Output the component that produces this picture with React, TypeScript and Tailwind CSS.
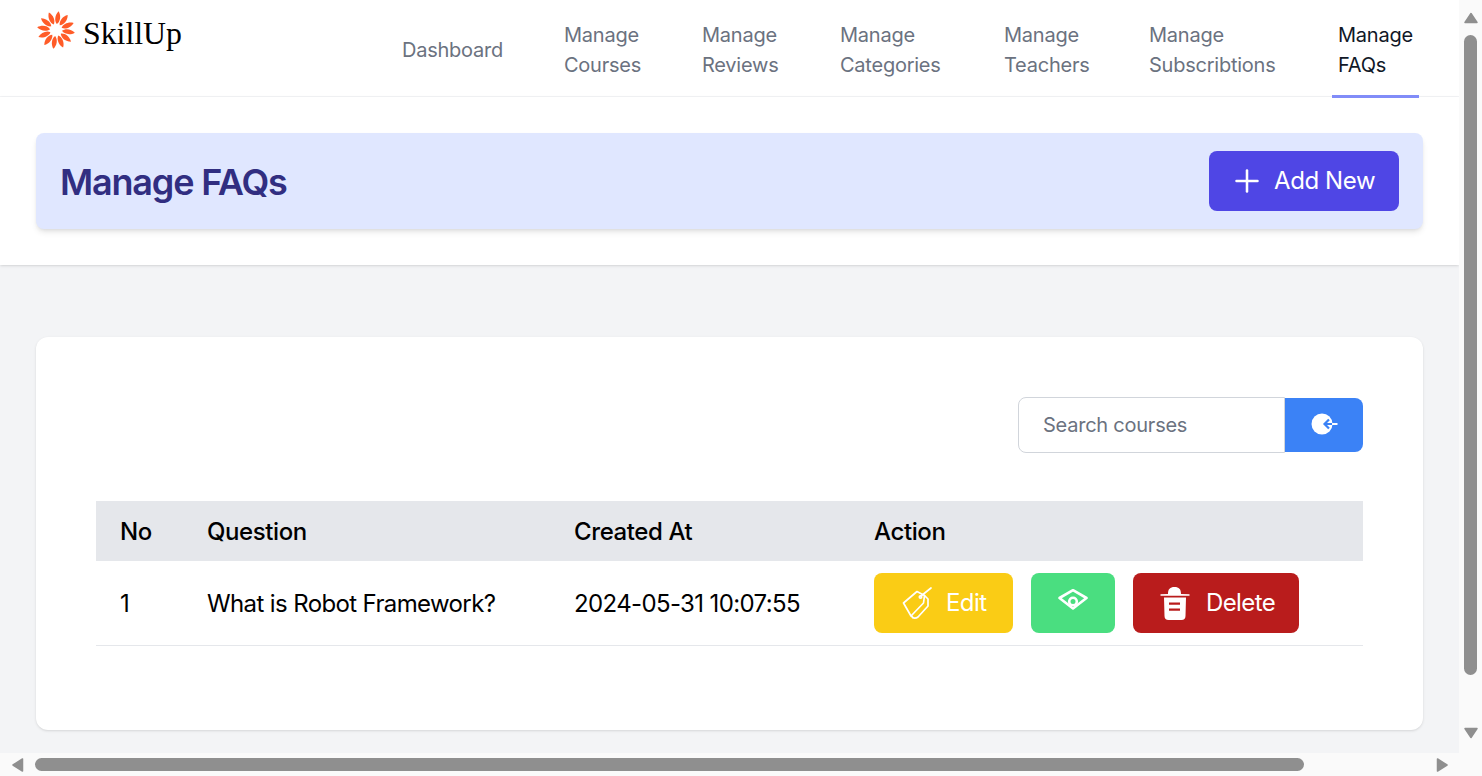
import { Plus } from "lucide-react"

const navItems = [
  { lines: ["Dashboard"], width: "w-[114px]" },
  { lines: ["Manage", "Courses"], width: "w-[90px]" },
  { lines: ["Manage", "Reviews"], width: "w-[90px]" },
  { lines: ["Manage", "Categories"], width: "w-[116px]" },
  { lines: ["Manage", "Teachers"], width: "w-[97px]" },
  { lines: ["Manage", "Subscribtions"], width: "w-[141px]" },
]

function Logo() {
  const petals = Array.from({ length: 12 }, (_, i) => i * 30 + 8)
  return (
    <svg width="38" height="38" viewBox="0 0 38 38" className="shrink-0">
      {petals.map((deg) => (
        <path
          key={deg}
          d="M19 13 C15.8 10 15.8 4 19 0 C22.2 4 22.2 10 19 13 Z"
          fill="#ff5c28"
          transform={`rotate(${deg} 19 19)`}
        />
      ))}
    </svg>
  )
}

function TagIcon() {
  return (
    <svg width="30" height="34" viewBox="6 3 30 34" fill="none" stroke="#fff" strokeWidth="1.7" strokeLinejoin="round" strokeLinecap="round" className="shrink-0">
      <path d="M7.5 20 L21 8.5 L28.5 12.5 L27.5 20 L15 33 Z" />
      <path d="M15.5 33 C17 36 20 35.5 22 34 L32 23 L32 16 L28.5 12.5" />
      <circle cx="24.5" cy="14" r="1.2" />
      <path d="M25 13 L35 5" />
    </svg>
  )
}

function EyeIcon() {
  return (
    <svg width="30" height="22" viewBox="0 0 30 22" fill="none" stroke="#fff" className="shrink-0">
      <path d="M1.5 9 L15 1.2 L28.5 9 L15 19.5 Z" strokeWidth="2.6" strokeLinejoin="round" />
      <circle cx="15" cy="12.5" r="3.8" strokeWidth="2.6" />
    </svg>
  )
}

function TrashIcon() {
  return (
    <svg width="30" height="35" viewBox="6 4 30 35" fill="#fff" className="shrink-0">
      <path d="M14 12 C14 7 16 5 20.5 5 C25 5 27 7 27 12 L35.5 12.2 L35.5 13.8 L6.5 13.8 L6.5 12.2 Z" />
      <path
        fillRule="evenodd"
        d="M10 15.5 L32 15.5 L31.5 34 C31.5 36.5 30 38 27.5 38 L14.5 38 C12 38 10.5 36.5 10.5 34 Z M15 20.5 L15 22.8 L26 22.8 L26 20.5 Z M15 26.5 L15 28.8 L26 28.8 L26 26.5 Z"
      />
    </svg>
  )
}

function SearchIcon() {
  return (
    <svg width="28" height="28" viewBox="0 0 28 28">
      <circle cx="12" cy="13" r="10.5" fill="#fff" />
      <path d="M22 13 L15 13 M19 8.5 L14.5 13 L19 17.5" fill="none" stroke="#3b82f6" strokeWidth="2.2" />
      <path d="M22 13 L27.5 13" fill="none" stroke="#fff" strokeWidth="2" />
    </svg>
  )
}

function ScrollArrow({ points }: { points: string }) {
  return (
    <svg width="16" height="16" viewBox="0 0 16 16" className="shrink-0">
      <polygon points={points} fill="#8f8f8f" stroke="#8f8f8f" strokeWidth="1.5" strokeLinejoin="round" />
    </svg>
  )
}

export default function App() {
  return (
    <div className="flex h-screen flex-col overflow-hidden bg-[#fafafa] font-['Inter',sans-serif] tracking-[-0.025em]">
      <div className="flex min-h-0 flex-1">
        <div className="min-w-0 flex-1 bg-[#f3f4f6]">
          <header className="flex h-[97px] justify-between border-b border-[#f3f4f6] bg-white pl-[37px] pr-[40px]">
            <div className="flex items-start gap-[8px] pt-[11px]">
              <Logo />
              <span className="pt-[3px] font-['Liberation_Serif',serif] text-[31.8px] leading-[40px] tracking-normal text-black">SkillUp</span>
            </div>
            <nav className="flex gap-[48px]">
              {navItems.map((item) => (
                <a key={item.lines.join(" ")} className={`${item.width} flex h-[96px] flex-col justify-center px-[6px] pt-[4px] text-[20px] leading-[30px] tracking-[-0.012em] text-[#6b7280]`}>
                  {item.lines.map((line) => (
                    <span key={line} className="whitespace-nowrap">{line}</span>
                  ))}
                </a>
              ))}
              <a className="flex h-[98px] w-[87px] flex-col justify-center border-b-[3px] border-[#818cf8] px-[6px] pt-[5px] text-[20px] leading-[30px] tracking-[-0.012em] text-[#111827]">
                <span>Manage</span>
                <span>FAQs</span>
              </a>
            </nav>
          </header>

          <div className="h-[168px] bg-white px-[36px] pt-[36px] shadow">
            <div className="flex h-[96px] items-center justify-between rounded-lg bg-[#e0e7ff] px-[24px] shadow-md">
              <h1 className="pt-[1px] text-[36px] font-semibold leading-[40px] tracking-[-0.033em] text-[#312e81]">Manage FAQs</h1>
              <button className="flex h-[60px] w-[190px] items-center gap-[9px] rounded-lg bg-[#4f46e5] pl-[20px] text-[24px] font-normal text-white">
                <Plus size={36} strokeWidth={1.7} />
                Add New
              </button>
            </div>
          </div>

          <div className="px-[36px] pt-[72px]">
            <div className="h-[393px] rounded-xl bg-white px-[60px] pt-[60px] shadow-sm">
              <div className="flex justify-end">
                <div className="flex h-[56px] w-[267px] items-center rounded-l-lg border border-[#d1d5db] bg-white pl-[24px] text-[20px] tracking-[-0.012em] text-[#6b7280]">
                  Search courses
                </div>
                <button className="mt-[1px] flex h-[54px] w-[78px] items-center justify-center rounded-r-lg bg-[#3b82f6]">
                  <SearchIcon />
                </button>
              </div>

              <table className="mt-[48px] w-full table-fixed text-left text-[24px] text-black">
                <thead>
                  <tr className="h-[60px] bg-[#e5e7eb]">
                    <th className="w-[87px] pl-[24px] pt-[2px] font-medium">No</th>
                    <th className="w-[367px] pl-[24px] pt-[2px] font-medium">Question</th>
                    <th className="w-[300px] pl-[24px] pt-[2px] font-medium">Created At</th>
                    <th className="pl-[24px] pt-[2px] font-medium">Action</th>
                  </tr>
                </thead>
                <tbody className="tracking-[-0.026em]">
                  <tr className="h-[84px] border-b border-[#e5e7eb]">
                    <td className="pl-[24px] pt-[2px]">1</td>
                    <td className="pl-[24px] pt-[2px]">What is Robot Framework?</td>
                    <td className="pl-[24px] pt-[2px]">2024-05-31 10:07:55</td>
                    <td className="pl-[24px] pt-[1px] tracking-[-0.025em]">
                      <div className="flex gap-[18px]">
                        <button className="flex h-[60px] w-[139px] items-center gap-[14px] rounded-lg bg-[#facc15] pl-[28px] text-[24px] text-white">
                          <TagIcon />
                          Edit
                        </button>
                        <button className="flex h-[60px] w-[84px] items-center justify-center rounded-lg bg-[#4ade80] pb-[6px]">
                          <EyeIcon />
                        </button>
                        <button className="flex h-[60px] w-[166px] items-center gap-[16px] rounded-lg bg-[#b91c1c] pl-[27px] text-[24px] text-white">
                          <TrashIcon />
                          Delete
                        </button>
                      </div>
                    </td>
                  </tr>
                </tbody>
              </table>
            </div>
          </div>
        </div>

        {/* vertical scrollbar */}
        <div className="flex w-[23px] shrink-0 flex-col items-center bg-[#fafafa]">
          <div className="mt-[10px]">
            <ScrollArrow points="8,3.5 14,12.5 2,12.5" />
          </div>
          <div className="mt-[9px] h-[640px] w-[13px] rounded-full bg-[#8f8f8f]" />
          <div className="mt-[50px]">
            <ScrollArrow points="2,3.5 14,3.5 8,12.5" />
          </div>
        </div>
      </div>

      {/* horizontal scrollbar */}
      <div className="flex h-[23px] shrink-0 items-center bg-[#fafafa] pl-[10px]">
        <ScrollArrow points="3,8 12.5,2 12.5,14" />
        <div className="ml-[9px] h-[13px] w-[1269px] rounded-full bg-[#8f8f8f]" />
        <div className="ml-[130px]">
          <ScrollArrow points="3.5,2 13,8 3.5,14" />
        </div>
      </div>
    </div>
  )
}
